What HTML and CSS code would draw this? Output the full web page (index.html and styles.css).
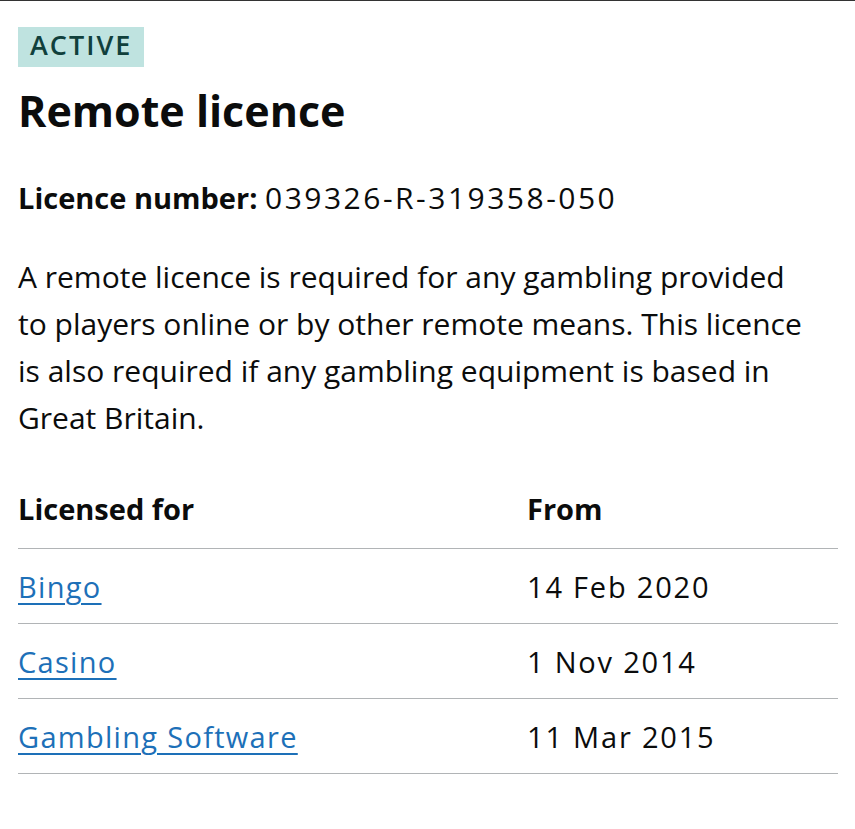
FILE: index.html
```html
<!DOCTYPE html>
<html lang="en">
<head>
  <meta charset="UTF-8">
  <meta name="viewport" content="width=device-width, initial-scale=1.0">
  <title>Remote licence</title>
  <link rel="stylesheet" href="styles.css">
</head>
<body>
  <main class="licence">
    <strong class="tag">Active</strong>
    <h1 class="licence-title">Remote licence</h1>

    <p class="licence-number"><b>Licence number:</b> <span class="num">039326-R-319358-050</span></p>

    <p class="licence-text">A remote licence is required for any gambling provided to players online or by other remote means. This licence is also required if any gambling equipment is based in Great Britain.</p>

    <table class="activities">
      <thead>
        <tr>
          <th class="col-activity">Licensed for</th>
          <th>From</th>
        </tr>
      </thead>
      <tbody>
        <tr>
          <td><a href="#">Bingo</a></td>
          <td class="date">14 Feb 2020</td>
        </tr>
        <tr>
          <td><a href="#">Casino</a></td>
          <td class="date">1 Nov 2014</td>
        </tr>
        <tr>
          <td><a href="#">Gambling Software</a></td>
          <td class="date">11 Mar 2015</td>
        </tr>
      </tbody>
    </table>
  </main>
</body>
</html>
```

FILE: styles.css
```css
body {
  margin: 0;
  font-family: "Open Sans", "Lato", Arial, sans-serif;
  color: #0b0c0c;
  border-top: 1px solid #333;
}
.licence {
  padding: 26px 17px 40px 18px;
}
.tag {
  display: inline-block;
  background-color: #bfe3e0;
  color: #10403c;
  font-size: 27px;
  font-weight: 600;
  letter-spacing: 2px;
  text-transform: uppercase;
  padding: 2px 12px 6px 12px;
  line-height: 32px;
}
.licence-title {
  font-size: 43px;
  font-weight: 700;
  line-height: 50px;
  margin: 19px 0 0 0;
}
.licence-number {
  font-size: 29px;
  line-height: 40px;
  margin: 42px 0 0 0;
}
.licence-number .num {
  font-size: 30px;
  letter-spacing: 2.5px;
}
.licence-text {
  font-size: 30px;
  line-height: 47px;
  max-width: 793px;
  margin: 35px 0 0 0;
}
.activities {
  width: 100%;
  border-collapse: collapse;
  margin-top: 45px;
  font-size: 29px;
}
.activities th,
.activities td {
  text-align: left;
  padding: 0;
  border-bottom: 1px solid #b1b4b6;
  height: 74px;
}
.activities th {
  font-weight: 700;
  height: 59px;
  vertical-align: top;
  padding-top: 3px;
}
.col-activity {
  width: 509px;
}
.activities .date {
  letter-spacing: 1.8px;
}
.activities a {
  color: #1d70b8;
  letter-spacing: 1.3px;
  text-decoration: underline;
  text-underline-offset: 5px;
  text-decoration-thickness: 2px;
}
```
